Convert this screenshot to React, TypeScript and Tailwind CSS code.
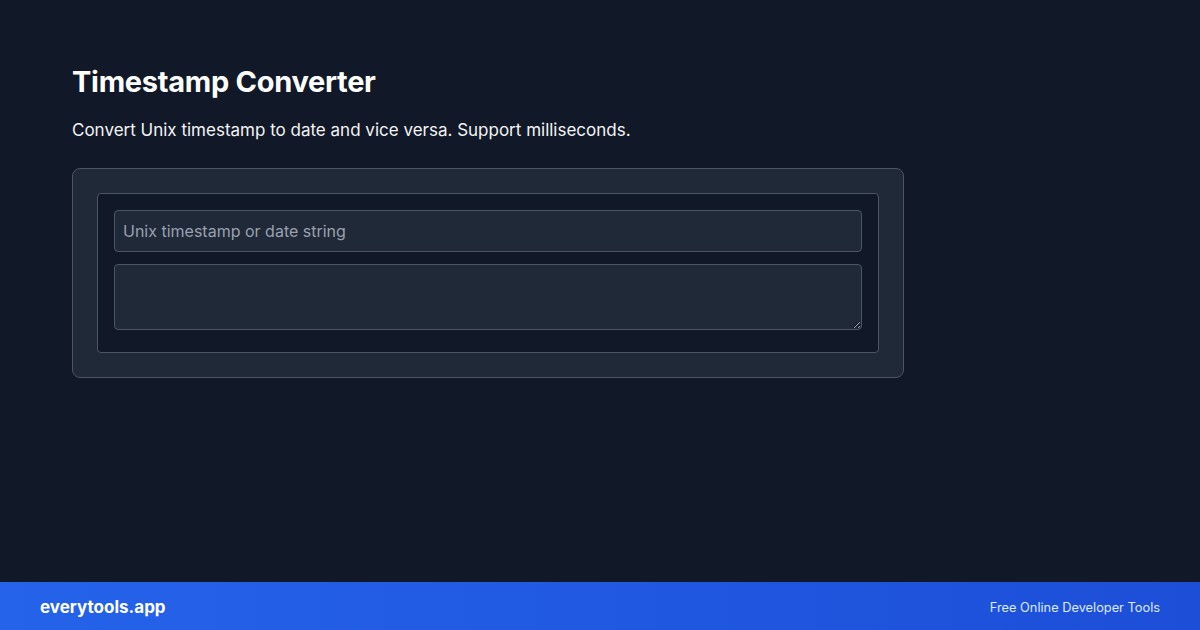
export default function App() {
  return (
    <div
      className="w-[1200px] h-[630px] bg-[#111827] flex flex-col overflow-hidden"
      style={{ fontFamily: 'Inter, "Noto Sans", sans-serif' }}
    >
      <main className="flex-1 px-[72px] pt-16">
        <h1 className="text-[29px] leading-9 font-bold text-white tracking-[-0.01em]">Timestamp Converter</h1>
        <p className="mt-[18px] text-[17px] leading-6 text-gray-100">
          Convert Unix timestamp to date and vice versa. Support milliseconds.
        </p>

        <div className="mt-[26px] w-[832px] rounded-lg border border-gray-600 bg-[#1f2937] p-6">
          <div className="rounded border border-gray-600 bg-[#111827] px-4 pt-4 pb-[22px] flex flex-col gap-3">
            <input
              type="text"
              placeholder="Unix timestamp or date string"
              className="h-[42px] w-full rounded border border-gray-600 bg-[#1f2937] px-2 text-[16px] text-gray-100 placeholder:text-gray-400 outline-none"
            />
            <textarea
              className="h-[66px] w-full rounded border border-gray-600 bg-[#1f2937] px-2 py-2 text-[16px] text-gray-100 outline-none"
            />
          </div>
        </div>
      </main>

      <footer className="h-12 flex items-center justify-between px-10 pt-[3px] bg-gradient-to-r from-[#2563eb] to-[#1d4ed8]">
        <span className="text-[17px] font-bold text-white">everytools.app</span>
        <span className="text-[12.8px] text-blue-100">Free Online Developer Tools</span>
      </footer>
    </div>
  )
}
